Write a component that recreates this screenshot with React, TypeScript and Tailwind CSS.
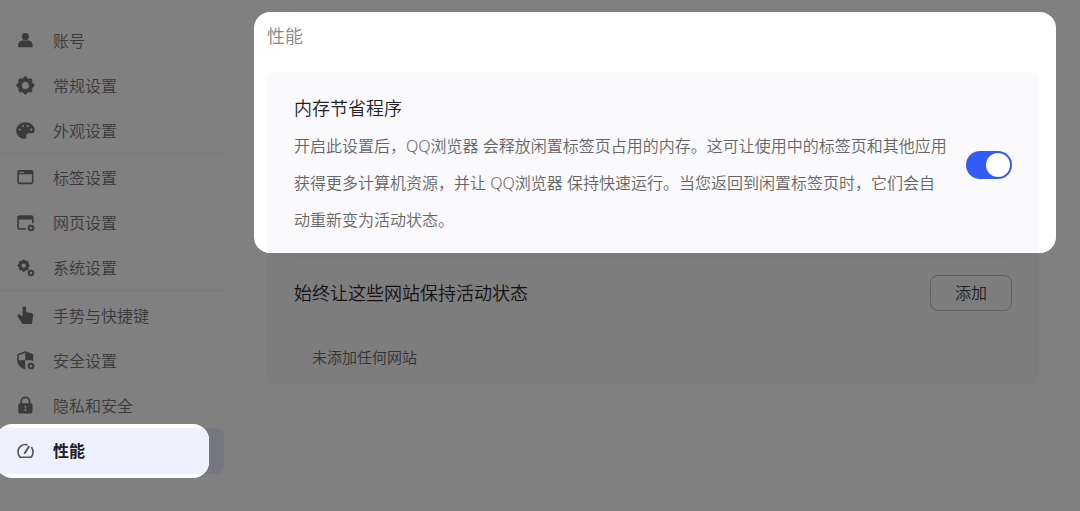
import React from "react";

const gearPath = (cx: number, cy: number, r: number, hole: number) => {
  const points: string[] = [];
  for (let i = 0; i < 32; i++) {
    const angle = ((i - 0.5) * Math.PI) / 16;
    const radius = i % 4 < 2 ? r : r * 0.82;
    points.push(`${(cx + radius * Math.cos(angle)).toFixed(2)} ${(cy + radius * Math.sin(angle)).toFixed(2)}`);
  }
  return `M${points.join("L")}ZM${cx - hole} ${cy}a${hole} ${hole} 0 1 0 ${hole * 2} 0a${hole} ${hole} 0 1 0 ${-hole * 2} 0Z`;
};

const SmallGear = () => <circle cx="15" cy="15" r="2.3" fill="none" stroke="currentColor" strokeWidth="2" />;

const icons: Record<string, React.ReactNode> = {
  user: (
    <>
      <circle cx="9.4" cy="5.6" r="3.6" />
      <path d="M2.2 16.2v-2.4c0-2.6 2-4.2 4.6-4.2h5.2c2.6 0 4.6 1.6 4.6 4.2v2.4Z" />
    </>
  ),
  gear: <path fillRule="evenodd" strokeWidth="1" stroke="currentColor" strokeLinejoin="round" d={gearPath(9.4, 9.4, 8.6, 4)} />,
  palette: (
    <path
      fillRule="evenodd"
      d="M9.4 1.2C4.3 1.2.3 4.9.3 9.4s3.7 8.4 8.4 8.4c1.2 0 1.7-.7 1.6-1.7-.3-2.5.6-3.9 3-3.9h2.4c1.9 0 2.9-1.2 2.9-3 0-4.5-4-8-9.2-8ZM3.9 7.5a1.1 1.1 0 1 1 0 2.2 1.1 1.1 0 0 1 0-2.2Zm3.2-3.6a1.1 1.1 0 1 1 0 2.2 1.1 1.1 0 0 1 0-2.2Zm4.6 0a1.1 1.1 0 1 1 0 2.2 1.1 1.1 0 0 1 0-2.2Zm3.4 3.6a1.1 1.1 0 1 1 0 2.2 1.1 1.1 0 0 1 0-2.2Z"
    />
  ),
  tab: (
    <>
      <rect x="2.1" y="2.8" width="14.6" height="12.6" rx="1.8" fill="none" stroke="currentColor" strokeWidth="1.6" />
      <path fillRule="evenodd" d="M2 2.5h14.8v3.8H2ZM3.6 3.6v1.3h4.2V3.6Z" />
    </>
  ),
  page: (
    <>
      <path d="M9.8 16H3.6a1.6 1.6 0 0 1-1.6-1.6V4.6A1.6 1.6 0 0 1 3.6 3h11.6a1.6 1.6 0 0 1 1.6 1.6v5.6" fill="none" stroke="currentColor" strokeWidth="1.6" />
      <path d="M2 3h14.8v3.6H2Z" />
      <SmallGear />
    </>
  ),
  gears: (
    <>
      <path fillRule="evenodd" strokeWidth="0.8" stroke="currentColor" strokeLinejoin="round" d={gearPath(7.7, 7.6, 5.8, 2.5)} />
      <SmallGear />
    </>
  ),
  hand: <path d="M8.4.2c1 0 1.8.8 1.8 1.8v4.3l5.4 1c1.2.3 1.8 1 1.6 2.2l-1.3 8.6H6.6L2 11.2c-.7-.9-.6-2 .2-2.6.8-.5 1.7-.3 2.3.3l2.1 1.7V2c0-1 .8-1.8 1.8-1.8Z" />,
  shield: (
    <>
      <path d="M9.2 1.1 2 3.7v5.4c0 4.2 2.9 7 7.4 8.7M9.2 1.1l7.2 2.6v6" fill="none" stroke="currentColor" strokeWidth="1.6" />
      <path d="M2 9.2h7.2v8.4C5 16 2 13.3 2 9.2ZM9.2 1.1l7.2 2.6v5.5H9.2Z" />
      <SmallGear />
    </>
  ),
  lock: (
    <>
      <path d="M5.2 8V5.6a4.2 4.2 0 0 1 8.4 0V8" fill="none" stroke="currentColor" strokeWidth="1.7" />
      <path fillRule="evenodd" d="M4 7.3h10.8c1 0 1.7.7 1.7 1.7v6.8c0 1-.7 1.7-1.7 1.7H4c-1 0-1.7-.7-1.7-1.7V9c0-1 .7-1.7 1.7-1.7Zm4.6 2.8v1.6h1.6v-1.6Zm0 2.6v2.4h1.6v-2.4Z" />
    </>
  ),
  gauge: (
    <g fill="none" stroke="currentColor" strokeWidth="1.6" strokeLinecap="round" strokeLinejoin="round">
      <path d="M11 2.7A7.3 7.3 0 0 0 2 9.8c0 2 .7 4 2 5.5h10.8a7.3 7.3 0 0 0 .8-9.7" />
      <path d="m8.8 11 4-6.2" strokeWidth="2" />
    </g>
  ),
};

const Icon = ({ name }: { name: string }) => (
  <svg className="size-[19px] shrink-0" viewBox="0 0 19 19" fill="currentColor" aria-hidden="true">
    {icons[name]}
  </svg>
);

const NavItem = ({ icon, label }: { icon: string; label: string }) => (
  <li>
    <a href="#" className="flex h-[45px] items-center gap-[18px] pl-4 text-base text-[#3a3a3a]">
      <Icon name={icon} />
      {label}
    </a>
  </li>
);

const Sidebar = () => (
  <nav className="w-56 shrink-0 pt-[18px]">
    <ul>
      <NavItem icon="user" label="账号" />
      <NavItem icon="gear" label="常规设置" />
      <NavItem icon="palette" label="外观设置" />
    </ul>
    <ul className="border-t border-[#797979] pt-px">
      <NavItem icon="tab" label="标签设置" />
      <NavItem icon="page" label="网页设置" />
      <NavItem icon="gears" label="系统设置" />
    </ul>
    <ul className="border-t border-[#797979] pt-0.5">
      <NavItem icon="hand" label="手势与快捷键" />
      <NavItem icon="shield" label="安全设置" />
      <NavItem icon="lock" label="隐私和安全" />
      <li className="relative rounded-r-lg bg-[#77787f]">
        {/* spotlight spills over the row on both sides */}
        <div className="absolute -inset-y-1 -left-1 right-[15px] overflow-hidden rounded-2xl bg-white py-1">
          <div className="h-full bg-[#eef0fe]" />
        </div>
        <a href="#" aria-current="page" className="relative flex h-[46px] items-center gap-[18px] pl-4 text-base font-bold text-[#222]">
          <span className="text-[#555]">
            <Icon name="gauge" />
          </span>
          性能
        </a>
      </li>
    </ul>
  </nav>
);

const App = () => {
  return (
    <div className="flex min-h-screen bg-[#808080] font-['Noto_Sans','Noto_Sans_CJK_SC',sans-serif] font-[350]">
      <Sidebar />
      <main className="min-w-0 flex-1 pt-3 pr-6 pb-6 pl-[30px]">
        <section className="rounded-2xl bg-white pt-3 pr-[17px] pl-[13px] text-[#222]">
          <h1 className="text-lg leading-6 text-[#888]">性能</h1>
          <div className="mt-6 flex items-center justify-between rounded-t-lg bg-[#fafafc] px-[27px] pt-[18px] pb-3.5">
            <div className="max-w-[654px] pt-1.5">
              <h2 id="memory-saver" className="text-lg leading-6 text-[#222]">内存节省程序</h2>
              <p className="mt-2 text-base leading-[37px] text-[#666]">
                开启此设置后，QQ浏览器 会释放闲置标签页占用的内存。这可让使用中的标签页和其他应用获得更多计算机资源，并让 QQ浏览器 保持快速运行。当您返回到闲置标签页时，它们会自动重新变为活动状态。
              </p>
            </div>
            <input
              type="checkbox"
              role="switch"
              aria-labelledby="memory-saver"
              defaultChecked
              className="h-7 w-[46px] shrink-0 cursor-pointer appearance-none rounded-full bg-[#bbb] p-0.5 before:block before:size-6 before:rounded-full before:bg-white checked:bg-[#335cf5] checked:before:ml-[18px]"
            />
          </div>
        </section>
        <section className="mr-[17px] ml-[13px] rounded-b-lg bg-[#7d7d7e] px-[27px] pt-[3px] pb-[15px]">
          <div className="flex items-center justify-between border-t border-[#797979] pt-[18px]">
            <h2 className="text-lg leading-6 text-[#111]">始终让这些网站保持活动状态</h2>
            <button type="button" className="h-9 w-[82px] cursor-pointer rounded-lg border border-[#5f5f5f] text-base text-[#222]">
              添加
            </button>
          </div>
          <p className="mt-[34px] pl-[18px] text-[15px] leading-6 text-[#333]">未添加任何网站</p>
        </section>
      </main>
    </div>
  );
};

export default App;
